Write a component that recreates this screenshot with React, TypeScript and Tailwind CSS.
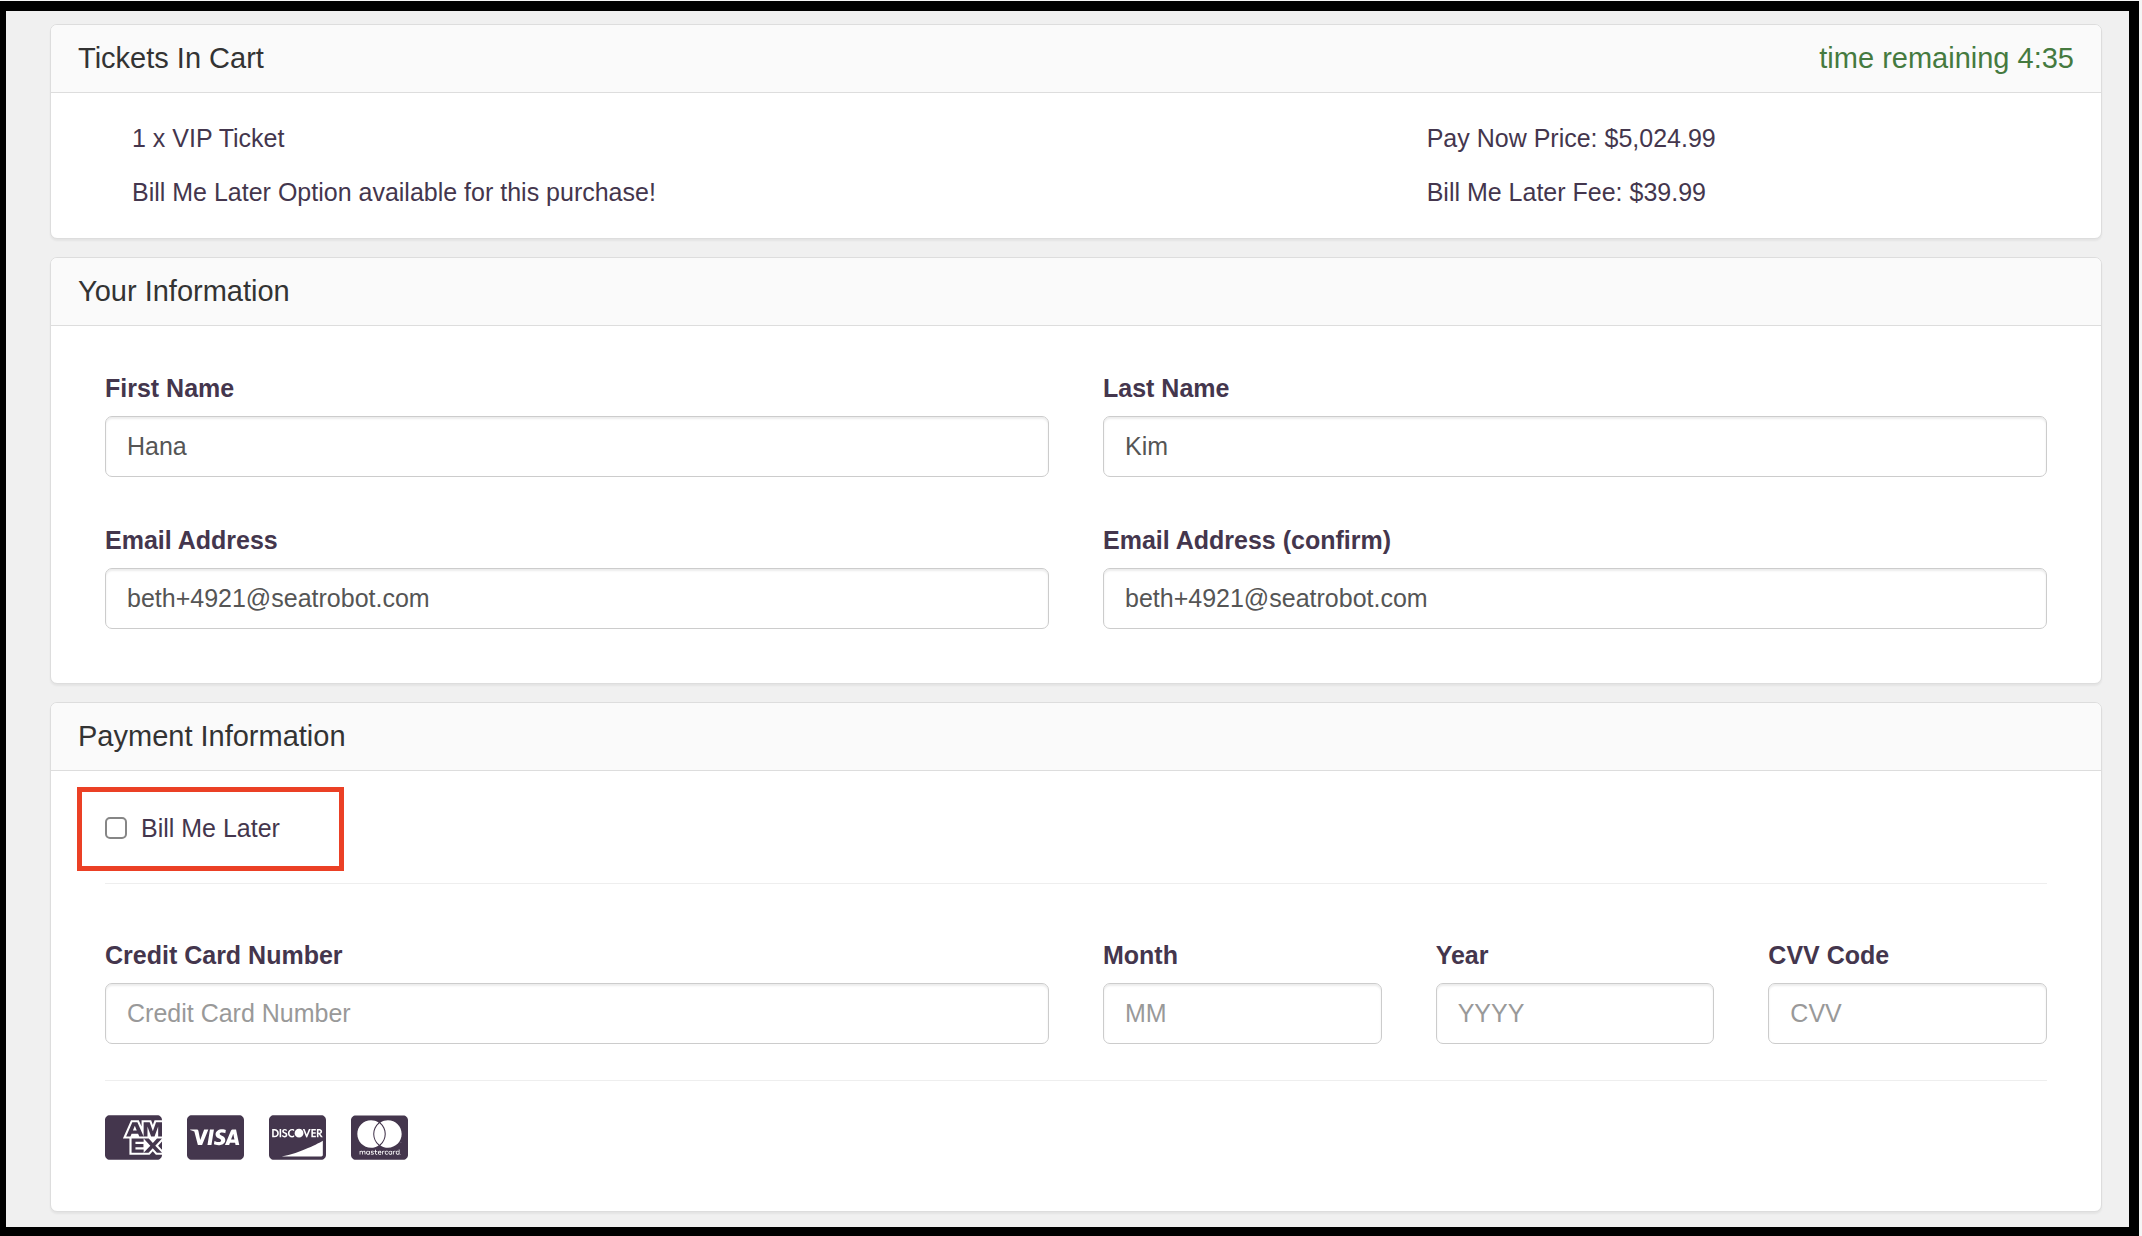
import React, { useState } from 'react';
import { FaCcAmex, FaCcDiscover, FaCcMastercard, FaCcVisa } from 'react-icons/fa6';

type FieldProps = {
  id: string;
  label: string;
  type?: string;
  value: string;
  placeholder?: string;
  onChange: (id: string, value: string) => void;
};

function Field({ id, label, type = 'text', value, placeholder, onChange }: FieldProps) {
  return (
    <div className="min-w-0">
      <label htmlFor={id} className="block mb-[10px] font-bold text-[#44364d]">{label}</label>
      <input
        id={id}
        type={type}
        value={value}
        placeholder={placeholder}
        onChange={e => onChange(id, e.target.value)}
        className="block w-full h-[61px] px-[21px] rounded-[7px] border border-[#ccc] bg-white text-[#555] placeholder:text-[#999] shadow-[inset_0_2px_2px_rgba(0,0,0,0.075)] outline-none focus:border-[#66afe9]"
      />
    </div>
  );
}

type PanelProps = {
  title: string;
  aside?: React.ReactNode;
  children: React.ReactNode;
};

function Panel({ title, aside, children }: PanelProps) {
  return (
    <section className="overflow-hidden rounded-[7px] border border-[#ddd] bg-white shadow-[0_2px_2px_rgba(0,0,0,0.05)]">
      <header className="flex justify-between px-[27px] pt-[17px] pb-[18px] border-b border-[#ddd] bg-[#fafafa] text-[29px] leading-8">
        <h2 className="text-[#333]">{title}</h2>
        {aside}
      </header>
      {children}
    </section>
  );
}

const cards = [
  { name: 'American Express', Icon: FaCcAmex },
  { name: 'Visa', Icon: FaCcVisa },
  { name: 'Discover', Icon: FaCcDiscover },
  { name: 'Mastercard', Icon: FaCcMastercard },
];

export default function App() {
  const [billLater, setBillLater] = useState(false);
  const [form, setForm] = useState({
    firstName: 'Hana',
    lastName: 'Kim',
    email: 'beth+4921@seatrobot.com',
    emailConfirm: 'beth+4921@seatrobot.com',
    cardNumber: '',
    month: '',
    year: '',
    cvv: '',
  });

  const update = (id: string, value: string) => {
    setForm(prev => ({ ...prev, [id]: value }));
  };

  return (
    <div className="min-h-screen flex flex-col pt-px pr-[3px] bg-[#f5f5f5] font-['Liberation_Sans',Arial,sans-serif] text-[25px] leading-9 text-[#44364d]">
      <main className="flex-1 flex flex-col gap-[18px] pt-[13px] pr-[27px] pb-[15px] pl-11 border-black border-t-[10px] border-r-[10px] border-b-[9px] border-l-[6px] bg-[#f0f0f0]">
        <Panel
          title="Tickets In Cart"
          aside={<p className="text-[#457a3f]">time remaining 4:35</p>}
        >
          <div className="grid grid-cols-[2fr_1fr] gap-y-[18px] px-[54px] pt-[27px] pb-7">
            <p className="px-[27px]">1 x VIP Ticket</p>
            <p className="px-[27px]">Pay Now Price: $5,024.99</p>
            <p className="px-[27px]">Bill Me Later Option available for this purchase!</p>
            <p className="px-[27px]">Bill Me Later Fee: $39.99</p>
          </div>
        </Panel>

        <Panel title="Your Information">
          <div className="grid grid-cols-2 gap-x-[54px] gap-y-[45px] px-[54px] pt-11 pb-[54px]">
            <Field id="firstName" label="First Name" value={form.firstName} onChange={update} />
            <Field id="lastName" label="Last Name" value={form.lastName} onChange={update} />
            <Field id="email" label="Email Address" type="email" value={form.email} onChange={update} />
            <Field id="emailConfirm" label="Email Address (confirm)" type="email" value={form.emailConfirm} onChange={update} />
          </div>
        </Panel>

        <Panel title="Payment Information">
          <div className="px-[54px] pt-4 pb-12">
            {/* Highlighted option */}
            <div className="w-[267px] -ml-7 mb-3 px-[23px] pt-[18px] pb-5 border-[5px] border-[#eb4025]">
              <label htmlFor="billLater" className="flex items-center gap-[14px]">
                <input
                  id="billLater"
                  type="checkbox"
                  checked={billLater}
                  onChange={e => setBillLater(e.target.checked)}
                  className="appearance-none size-[22px] rounded-[5px] border-2 border-[#868686] bg-white checked:bg-[#44364d]"
                />
                Bill Me Later
              </label>
            </div>

            <hr className="border-[#eee]" />

            <div className="grid grid-cols-2 gap-x-[54px] pt-[53px] pb-9">
              <Field id="cardNumber" label="Credit Card Number" placeholder="Credit Card Number" value={form.cardNumber} onChange={update} />
              <div className="grid grid-cols-3 gap-x-[54px]">
                <Field id="month" label="Month" placeholder="MM" value={form.month} onChange={update} />
                <Field id="year" label="Year" placeholder="YYYY" value={form.year} onChange={update} />
                <Field id="cvv" label="CVV Code" placeholder="CVV" value={form.cvv} onChange={update} />
              </div>
            </div>

            <hr className="border-[#eee]" />

            <ul className="flex gap-[25px] pt-[31px]">
              {cards.map(({ name, Icon }) => (
                <li key={name}>
                  <Icon role="img" aria-label={name} className="block w-[57px] h-[51px]" />
                </li>
              ))}
            </ul>
          </div>
        </Panel>
      </main>
    </div>
  );
}
